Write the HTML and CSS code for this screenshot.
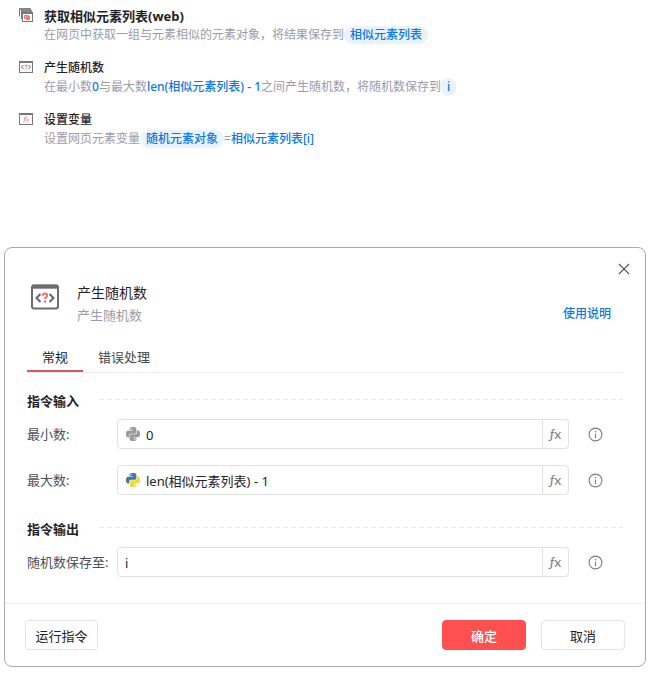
FILE: index.html
```html
<!DOCTYPE html>
<html lang="zh-CN">
<head>
  <meta charset="UTF-8" />
  <meta name="viewport" content="width=device-width, initial-scale=1.0"/>
  <title>产生随机数</title>
  <link rel="stylesheet" href="styles.css">
</head>
<body>

  <!-- shared symbols -->
  <svg class="symbols" aria-hidden="true">
    <symbol id="python-half" viewBox="0 0 24 24">
      <path fill-rule="evenodd" d="M14.25.18l.9.2.73.26.59.3.45.32.34.34.25.34.16.33.1.3.04.26.02.2-.01.13V8.5l-.05.63-.13.55-.21.46-.26.38-.3.31-.33.25-.35.19-.35.14-.33.1-.3.07-.26.04-.21.02H8.77l-.69.05-.59.14-.5.22-.41.27-.33.32-.27.35-.2.36-.15.37-.1.35-.07.32-.04.27-.02.21v3.06H3.17l-.21-.03-.28-.07-.32-.12-.35-.18-.36-.26-.36-.36-.35-.46-.32-.59-.28-.73-.21-.88-.14-1.05-.05-1.23.06-1.22.16-1.04.24-.87.32-.71.36-.57.4-.44.42-.33.42-.24.4-.16.36-.1.32-.05.24-.01h.16l.06.01h8.16v-.83H6.18l-.01-2.75-.02-.37.05-.34.11-.31.17-.28.25-.26.31-.23.38-.2.44-.18.51-.15.58-.12.64-.1.71-.06.77-.04.84-.02 1.27.05zm-6.3 1.98l-.23.33-.08.41.08.41.23.34.33.22.41.09.41-.09.33-.22.23-.34.08-.41-.08-.41-.23-.33-.33-.22-.41-.09-.41.09z"/>
    </symbol>
    <symbol id="info" viewBox="0 0 15 15">
      <circle cx="7.5" cy="7.5" r="6.4" fill="none" stroke="#7c7c7c" stroke-width="1.1"/>
      <path d="M7.5 6.5V11M7.5 4V5.2" stroke="#7c7c7c" stroke-width="1.1"/>
    </symbol>
  </svg>

  <ul class="steps">
    <li class="step">
      <svg class="step-icon" viewBox="0 0 16 16">
        <path d="M1.500 9.500V1.500h11" fill="none" stroke="#77777b"/>
        <path d="M1 2h12M3 4h11" stroke="#85858a" stroke-width="2"/>
        <path d="M3.500 12V4" fill="none" stroke="#77777b"/>
        <rect x="4.500" y="5.500" width="10" height="9" fill="#fff" stroke="#77777b"/>
        <path d="M4 6h11" stroke="#77777b" stroke-width="2"/>
        <path d="M6.500 8.500h4v3h-4zM8.500 9.500h3v3h-3z" fill="#fbd3d1" stroke="#f0706b"/>
      </svg>
      <div>
        <h2 class="step-title strong">获取相似元素列表(web)</h2>
        <p class="step-text">在网页中获取一组与元素相似的元素对象，将结果保存到<span class="pill">相似元素列表</span></p>
      </div>
    </li>
    <li class="step">
      <svg class="step-icon" viewBox="0 0 16 16">
        <rect x="1.500" y="2.500" width="13" height="11" fill="#fff" stroke="#77777b"/>
        <path d="M1 3h14" stroke="#77777b" stroke-width="2"/>
        <path d="M5.500 6L3.500 8l2 2M10.500 6l2 2-2 2" fill="none" stroke="#66666a"/>
        <path d="M7 7q0-1 1-1t1 1q0 .6-1 1.200v.4M8 9.500v1" fill="none" stroke="#f0605c"/>
      </svg>
      <div>
        <h2 class="step-title">产生随机数</h2>
        <p class="step-text">在最小数<span class="value">0</span>与最大数<span class="value">len(相似元素列表) - 1</span>之间产生随机数，将随机数保存到<span class="pill">i</span></p>
      </div>
    </li>
    <li class="step">
      <svg class="step-icon" viewBox="0 0 16 16">
        <rect x="1.500" y="2.500" width="13" height="11" fill="#fff" stroke="#77777b"/>
        <path d="M1 3h14" stroke="#77777b" stroke-width="2"/>
        <path d="M8.500 5.500q-1.300-.3-1.500 1l-.7 3.700q-.2 1-1.100.8M5.800 7.500h2.400M8.500 7.500l2 3M10.800 7.500l-2.600 3" fill="none" stroke="#f0807c" stroke-width=".8"/>
      </svg>
      <div>
        <h2 class="step-title">设置变量</h2>
        <p class="step-text">设置网页元素变量<span class="pill">随机元素对象</span>=<span class="value">相似元素列表[i]</span></p>
      </div>
    </li>
  </ul>

  <form class="dialog">
    <div class="dialog-top">
      <button type="button" class="close" aria-label="关闭">
        <svg width="12" height="12" viewBox="0 0 12 12"><path d="M1 1l10 10M11 1L1 11" stroke="#555" stroke-width="1.100"/></svg>
      </button>
    </div>

    <div class="dialog-body">
      <header class="dialog-header">
        <svg class="dialog-icon" viewBox="0 0 28 26">
          <rect x="1" y="1.500" width="26" height="23" rx="2" fill="#fff" stroke="#6d6d70" stroke-width="2"/>
          <path d="M1 2.700h26" stroke="#6d6d70" stroke-width="4"/>
          <path d="M9.500 10l-4 4 4 4M18.500 10l4 4-4 4" fill="none" stroke="#66666a" stroke-width="2"/>
          <path d="M11.800 11.800q0-2.300 2.200-2.300t2.200 2.100q0 1.200-1.200 1.900-1 .6-1 1.500M14 16.500v2" fill="none" stroke="#f96b67" stroke-width="2"/>
        </svg>
        <div class="heading">
          <h1>产生随机数</h1>
          <p>产生随机数</p>
        </div>
        <a class="help" href="#help">使用说明</a>
      </header>

      <nav class="tabs">
        <button type="button" class="tab active">常规</button>
        <button type="button" class="tab">错误处理</button>
      </nav>

      <section class="group">
        <h3 class="group-title">指令输入</h3>
        <div class="row">
          <label for="min">最小数:</label>
          <div class="field">
            <svg class="python" viewBox="0 0 24 24" fill="#9a9a9a">
              <use href="#python-half"/>
              <use href="#python-half" transform="rotate(180 12 12)"/>
            </svg>
            <input type="text" id="min" value="0">
            <button type="button" class="fx" aria-label="插入表达式"><i>ƒ</i>x</button>
          </div>
          <button type="button" class="info" aria-label="提示"><svg width="15" height="15"><use href="#info"/></svg></button>
        </div>
        <div class="row">
          <label for="max">最大数:</label>
          <div class="field">
            <svg class="python" viewBox="0 0 24 24">
              <use href="#python-half" fill="#3d7aab"/>
              <use href="#python-half" fill="#fbd43c" transform="rotate(180 12 12)"/>
            </svg>
            <input type="text" id="max" value="len(相似元素列表) - 1">
            <button type="button" class="fx" aria-label="插入表达式"><i>ƒ</i>x</button>
          </div>
          <button type="button" class="info" aria-label="提示"><svg width="15" height="15"><use href="#info"/></svg></button>
        </div>
      </section>

      <section class="group">
        <h3 class="group-title">指令输出</h3>
        <div class="row">
          <label for="output">随机数保存至:</label>
          <div class="field">
            <input type="text" id="output" value="i">
            <button type="button" class="fx" aria-label="选择变量"><i>ƒ</i>x</button>
          </div>
          <button type="button" class="info" aria-label="提示"><svg width="15" height="15"><use href="#info"/></svg></button>
        </div>
      </section>
    </div>

    <footer class="dialog-footer">
      <button type="button" class="button run">运行指令</button>
      <button type="submit" class="button primary">确定</button>
      <button type="button" class="button">取消</button>
    </footer>
  </form>

</body>
</html>
```
FILE: styles.css
```css
* {
  margin: 0;
  padding: 0;
  box-sizing: border-box;
}

body {
  font-family: "Noto Sans", "Noto Sans CJK SC", sans-serif;
  font-size: 13px;
  color: #1f2329;
  background: #fff;
  padding: 6px 11px 24px 4px;
}

button,
input {
  font: inherit;
  color: inherit;
  background: none;
  border: none;
}

button {
  cursor: pointer;
}

a {
  text-decoration: none;
}

svg {
  display: block;
  flex: none;
}

.symbols {
  position: absolute;
  width: 0;
  height: 0;
}

/* step list */
.steps {
  list-style: none;
  padding-left: 14px;
  margin-bottom: 85px;
}

.step {
  display: flex;
  gap: 10px;
  height: 52px;
}

.step-icon {
  width: 16px;
  height: 16px;
  margin-top: 1px;
}

.step-title {
  font-size: 12px;
  font-weight: 500;
  line-height: 20px;
}

.step-title.strong {
  font-size: 13px;
  font-weight: bold;
}

.step-text {
  font-size: 12px;
  line-height: 18px;
  color: #9a9ba8;
}

.value,
.pill {
  color: #0a78e6;
  font-weight: 500;
}

.pill {
  display: inline-block;
  padding: 0 6px;
  border-radius: 9px;
  background: #e8f3fd;
}

/* dialog */
.dialog {
  border: 1px solid #a9a9a9;
  border-radius: 8px;
}

.dialog-top {
  display: flex;
  justify-content: flex-end;
  padding: 11px 11px 3px;
}

.close {
  display: flex;
  align-items: center;
  justify-content: center;
  width: 20px;
  height: 20px;
}

.dialog-body {
  padding: 0 22px 26px;
}

.dialog-header {
  display: flex;
  padding: 0 12px 0 4px;
  margin-bottom: 16px;
}

.dialog-icon {
  width: 28px;
  height: 26px;
  margin-top: 2px;
}

.heading {
  flex: 1;
  margin-left: 18px;
  line-height: 22px;
}

.heading h1 {
  font-size: 14px;
  font-weight: normal;
}

.heading p {
  color: #9a9ba8;
}

.help {
  align-self: flex-end;
  font-size: 12px;
  font-weight: 500;
  line-height: 24px;
  color: #0a78e6;
}

.tabs {
  display: flex;
  border-bottom: 1px solid #ececec;
  margin-bottom: 18px;
}

.tab {
  height: 30px;
  padding: 0 15px 2px;
  color: #43474f;
}

.tab.active {
  color: #1f2329;
  box-shadow: inset 0 -2px #d9575a;
}

.group + .group {
  margin-top: 24px;
}

.group-title {
  display: flex;
  align-items: center;
  gap: 20px;
  font-size: 13px;
  line-height: 20px;
  margin-bottom: 8px;
}

.group-title::after {
  content: '';
  flex: 1;
  height: 1px;
  margin-bottom: 3px;
  background: repeating-linear-gradient(90deg, #e6e6e6 0 5px, transparent 5px 8px);
}

.row {
  display: flex;
  align-items: center;
}

.row + .row {
  margin-top: 16px;
}

.row label {
  width: 90px;
  line-height: 20px;
  padding-bottom: 1px;
  color: #4a505c;
  white-space: nowrap;
}

.field {
  flex: 1;
  display: flex;
  align-items: center;
  height: 30px;
  border: 1px solid #e1e1e1;
  border-radius: 4px;
}

.python {
  width: 14px;
  height: 14px;
  margin-left: 8px;
}

.field input {
  flex: 1;
  min-width: 0;
  height: 28px;
  padding: 1px 7px 0;
  outline: none;
}

.python + input {
  padding-left: 6px;
}

.fx {
  width: 26px;
  height: 28px;
  padding-bottom: 2px;
  border-left: 1px solid #e1e1e1;
  font-family: Lato, "Noto Sans", sans-serif;
  font-size: 14px;
  color: #7c7c7c;
}

.info {
  margin: 0 20px 0 19px;
}

.dialog-footer {
  display: flex;
  gap: 15px;
  padding: 16px 20px;
  border-top: 1px solid #efefef;
}

.button {
  width: 84px;
  height: 30px;
  border: 1px solid #e4e4e4;
  border-radius: 4px;
}

.button.run {
  width: 73px;
  margin-right: auto;
}

.button.primary {
  color: #fff;
  font-weight: 500;
  background: #ff5050;
  border-color: #ff5050;
}
```
